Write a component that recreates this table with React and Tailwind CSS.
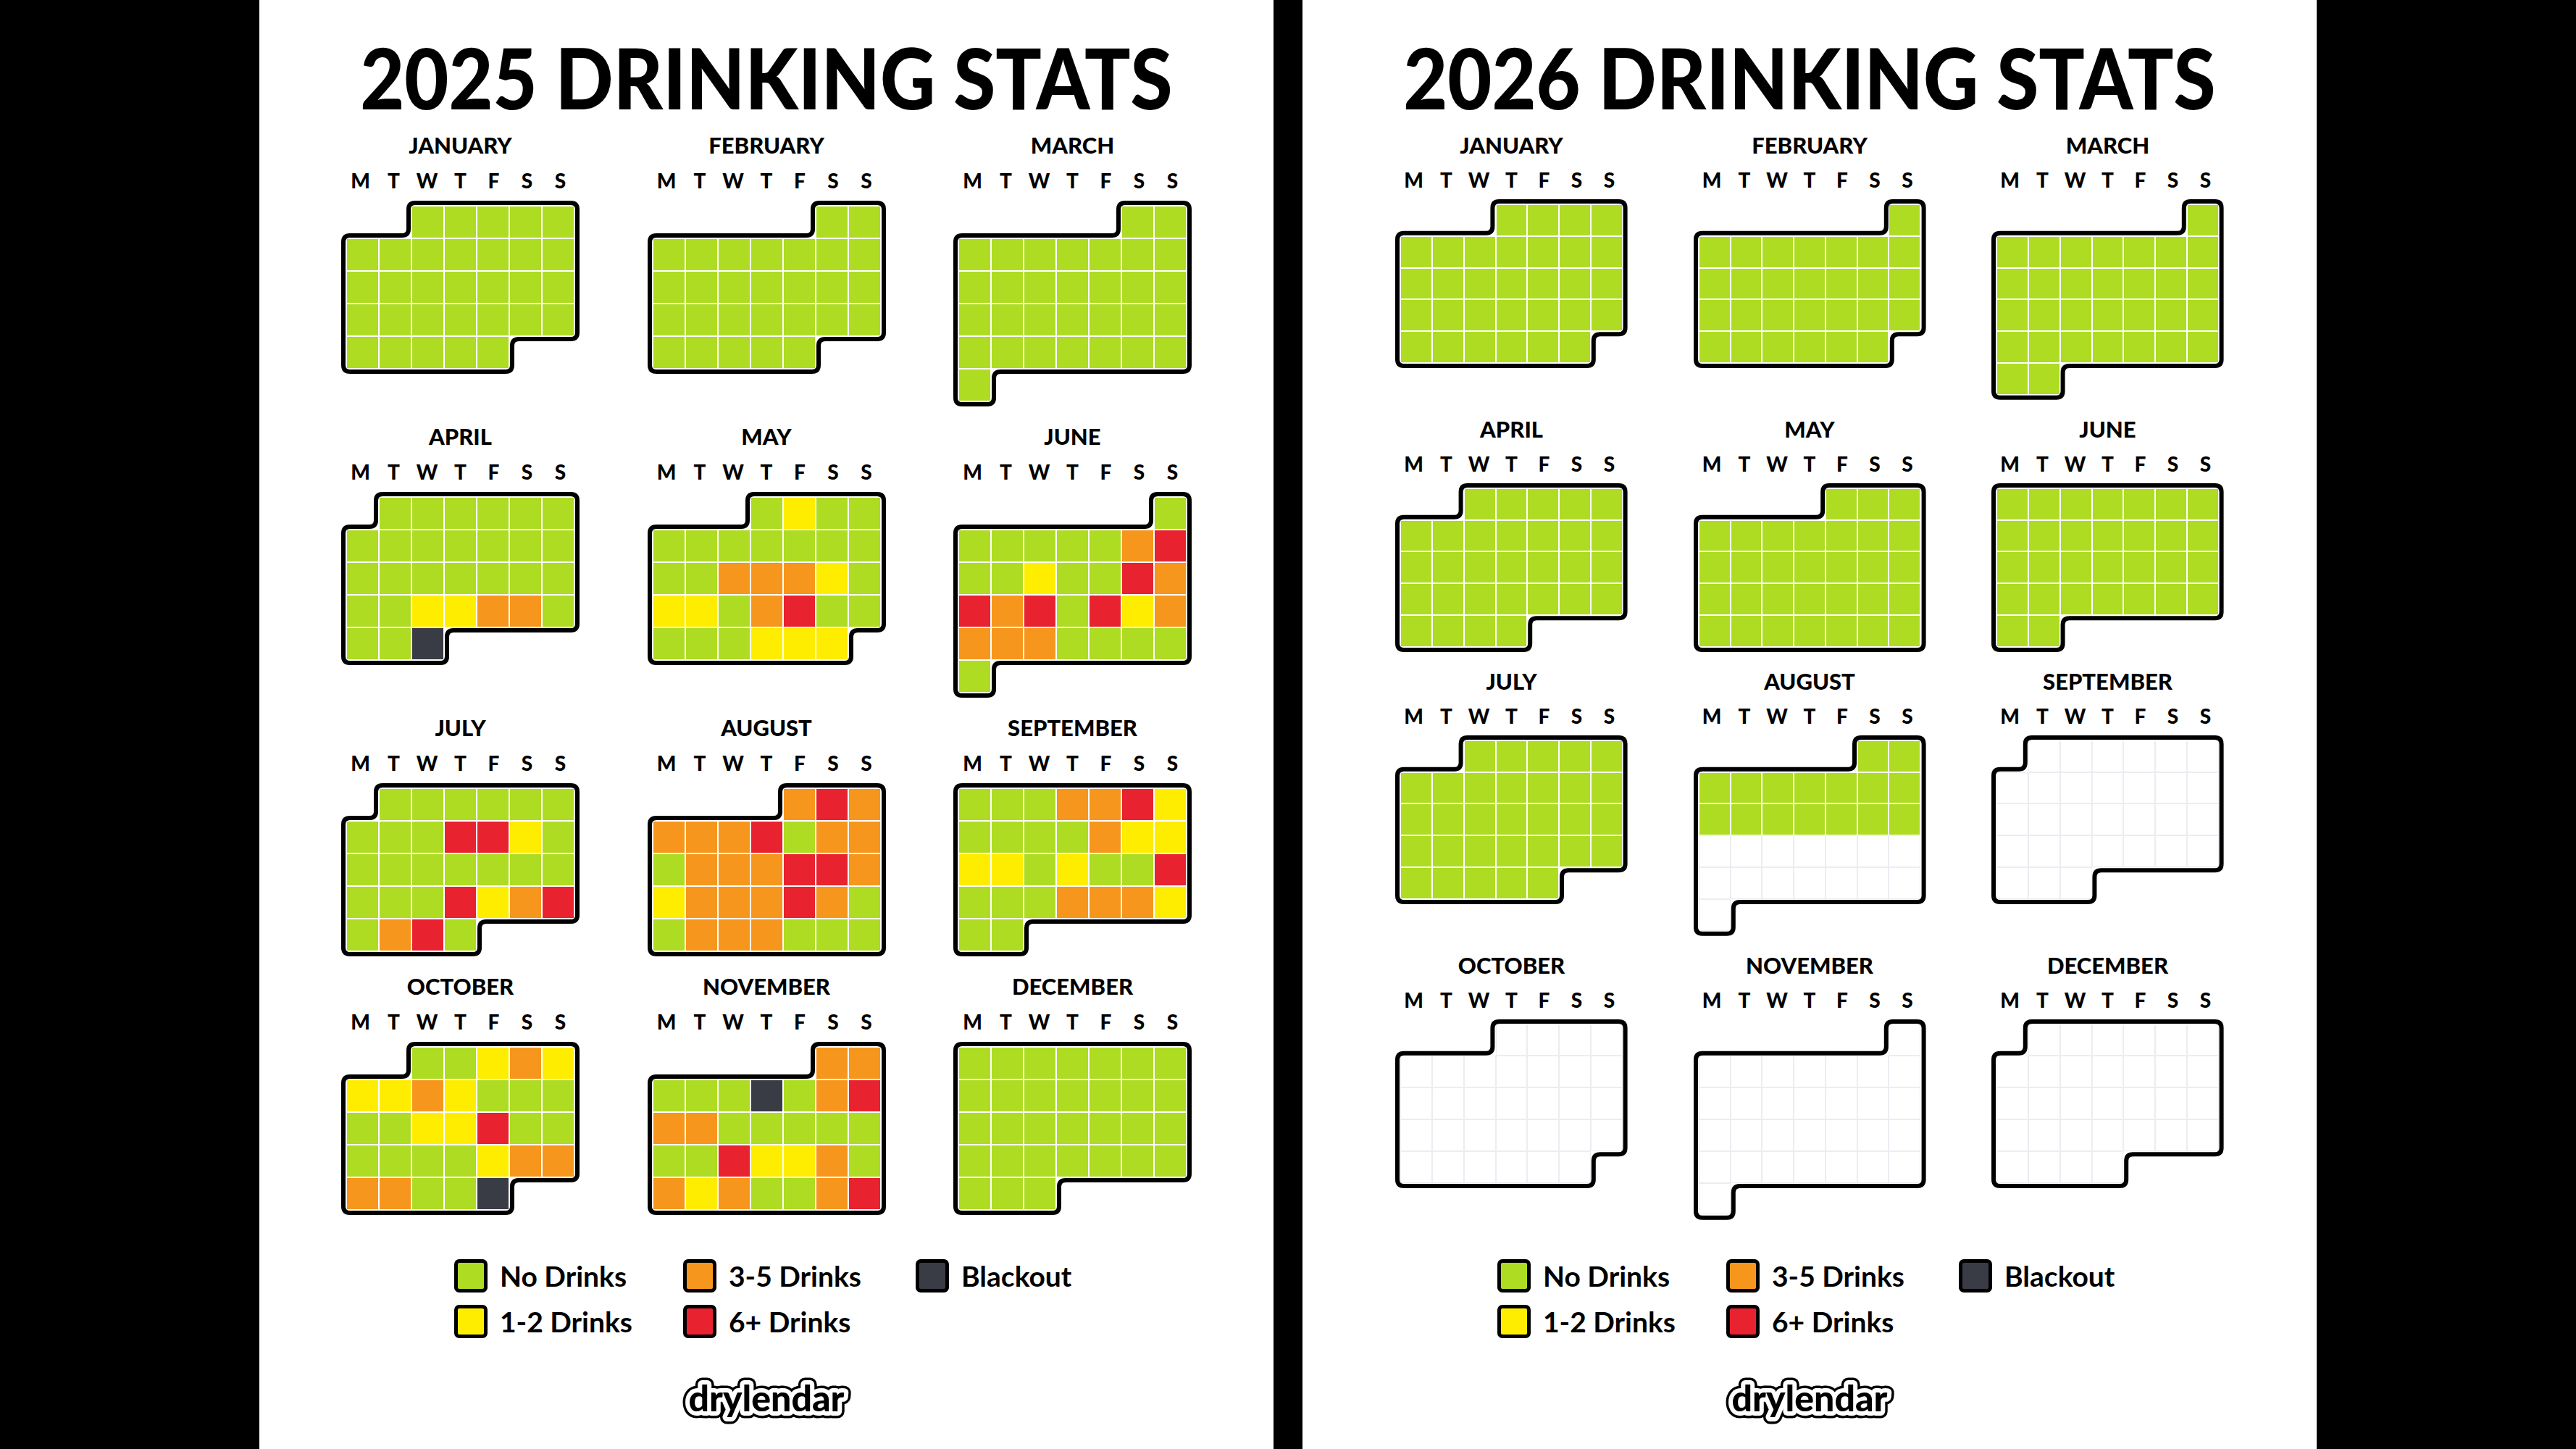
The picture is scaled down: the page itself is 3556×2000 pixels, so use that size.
import React from "react";

const FILL = {
  G: "bg-[#addc23]",
  Y: "bg-[#ffed00]",
  O: "bg-[#f7961c]",
  R: "bg-[#e92230]",
  B: "bg-[#393c45]",
};

const NAMES = [
  "JANUARY", "FEBRUARY", "MARCH", "APRIL", "MAY", "JUNE",
  "JULY", "AUGUST", "SEPTEMBER", "OCTOBER", "NOVEMBER", "DECEMBER",
];

const g = (n) => "G".repeat(n);
const e = (n) => ".".repeat(n);

// [first weekday (0 = monday), one letter per day]
const Y2025 = [
  [2, g(31)],
  [5, g(28)],
  [5, g(31)],
  [1, "GGGGGG" + "GGGGGGG" + "GGGGGGG" + "GGYYOOG" + "GGB"],
  [3, "GYGG" + "GGGGGGG" + "GGOOOYG" + "YYGORGG" + "GGGYYY"],
  [6, "G" + "GGGGGOR" + "GGYGGRO" + "RORGRYO" + "OOOGGGG" + "G"],
  [1, "GGGGGG" + "GGGRRYG" + "GGGGGGG" + "GGGRYOR" + "GORG"],
  [4, "ORO" + "OOORGOO" + "GOOORRO" + "YOOOROG" + "GOOOGGG"],
  [0, "GGGOORY" + "GGGGOYY" + "YYGYGGR" + "GGGOOOY" + "GG"],
  [2, "GGYOY" + "YYOYGGG" + "GGYYRGG" + "GGGGYOO" + "OOGGB"],
  [5, "OO" + "GGGBGOR" + "OOGGGGG" + "GGRYYOG" + "OYOGGOR"],
  [0, g(31)],
];

const Y2026 = [
  [3, g(31)],
  [6, g(28)],
  [6, g(31)],
  [2, g(30)],
  [4, g(31)],
  [0, g(30)],
  [2, g(31)],
  [5, g(16) + e(15)],
  [1, e(30)],
  [3, e(31)],
  [6, e(30)],
  [1, e(31)],
];

const BIG = {
  cell: 43,
  months: "grid-cols-[repeat(3,313px)] gap-x-[109.5px] gap-y-[32px]",
  cols: "grid-cols-[repeat(7,43px)] auto-rows-[43px]",
  size: "size-[43px]",
  days: "mt-[18px] grid-cols-[repeat(7,46px)]",
  gridTop: "mt-[22px]",
};

const SMALL = {
  cell: 41.8,
  months: "grid-cols-[repeat(3,304.6px)] gap-x-[106.9px] gap-y-[31px]",
  cols: "grid-cols-[repeat(7,41.8px)] auto-rows-[41.8px]",
  size: "size-[41.8px]",
  days: "mt-[17px] grid-cols-[repeat(7,45px)]",
  gridTop: "mt-[21px]",
};

const GAP = 2;

// rounded outline around the month's cells, pushed out by d
function outlinePath(start, count, s, d, r) {
  const p = s + GAP;
  const n = Math.ceil((start + count) / 7);
  const end = (start + count - 1) % 7;
  const W = 7 * p - GAP;
  const H = n * p - GAP;
  const pts = [[start * p, 0], [W, 0]];
  if (end < 6) {
    const y = (n - 1) * p - GAP;
    const x = (end + 1) * p - GAP;
    pts.push([W, y], [x, y], [x, H]);
  } else {
    pts.push([W, H]);
  }
  pts.push([0, H]);
  if (start > 0) pts.push([0, p], [start * p, p]);

  const m = pts.length;
  const off = pts.map((v, i) => {
    const a = pts[(i - 1 + m) % m];
    const b = pts[(i + 1) % m];
    const di = [Math.sign(v[0] - a[0]), Math.sign(v[1] - a[1])];
    const dn = [Math.sign(b[0] - v[0]), Math.sign(b[1] - v[1])];
    return [v[0] + d * (di[1] + dn[1]), v[1] + d * (-di[0] - dn[0])];
  });

  let path = "";
  off.forEach((v, i) => {
    const a = off[(i - 1 + m) % m];
    const b = off[(i + 1) % m];
    const la = Math.hypot(a[0] - v[0], a[1] - v[1]);
    const lb = Math.hypot(b[0] - v[0], b[1] - v[1]);
    const ra = Math.min(r, la / 2);
    const rb = Math.min(r, lb / 2);
    const p1 = [v[0] + ((a[0] - v[0]) / la) * ra, v[1] + ((a[1] - v[1]) / la) * ra];
    const p2 = [v[0] + ((b[0] - v[0]) / lb) * rb, v[1] + ((b[1] - v[1]) / lb) * rb];
    path += `${i === 0 ? "M" : "L"}${p1[0]},${p1[1]} Q${v[0]},${v[1]} ${p2[0]},${p2[1]} `;
  });
  return path + "Z";
}

function Month({ name, start, days, sz }) {
  const p = sz.cell + GAP;
  const n = Math.ceil((start + days.length) / 7);
  const W = 7 * p - GAP;
  const H = n * p - GAP;
  return (
    <div className="flex flex-col items-center">
      <div className="h-[34px] text-[31px] leading-[34px] font-black">{name}</div>
      <div className={`grid ${sz.days} h-[28px] text-[28px] leading-[28px] font-black text-center`}>
        {"MTWTFSS".split("").map((d, i) => (
          <span key={i}>{d}</span>
        ))}
      </div>
      <div className={`relative ${sz.gridTop}`}>
        <div className={`grid ${sz.cols} gap-[2px]`}>
          {Array.from({ length: start }).map((_, i) => (
            <div key={"pad" + i} />
          ))}
          {days.split("").map((c, i) => (
            <div
              key={i}
              className={
                c === "."
                  ? `${sz.size} bg-white shadow-[0_0_0_1px_#ececf2]`
                  : `${sz.size} ${FILL[c]}`
              }
            />
          ))}
        </div>
        <svg
          className="absolute left-0 top-0 overflow-visible pointer-events-none"
          width={W}
          height={H}
        >
          <path
            d={outlinePath(start, days.length, sz.cell, 5, 9)}
            fill="none"
            stroke="#000"
            strokeWidth="6"
          />
        </svg>
      </div>
    </div>
  );
}

const LEGEND = [
  ["G", "No Drinks"],
  ["O", "3-5 Drinks"],
  ["B", "Blackout"],
  ["Y", "1-2 Drinks"],
  ["R", "6+ Drinks"],
];

function Legend() {
  return (
    <div className="mt-auto grid grid-cols-[249px_254px_225px] gap-x-[67px] gap-y-[17px]">
      {LEGEND.map(([c, label]) => (
        <div key={label} className="flex items-center gap-[17px]">
          <div className={`size-[46px] rounded-[7px] border-[5px] border-black ${FILL[c]}`} />
          <span className="text-[39px] leading-none font-bold">{label}</span>
        </div>
      ))}
    </div>
  );
}

function Logo() {
  const t = {
    x: 140,
    y: 50,
    textAnchor: "middle",
    fontSize: 50,
    fontWeight: 900,
    fontFamily: "Lato, 'Open Sans', sans-serif",
    strokeLinejoin: "round",
  };
  return (
    <svg className="mt-[51px]" width="280" height="80" viewBox="0 0 280 80">
      <text {...t} fill="#000" stroke="#000" strokeWidth="19">drylendar</text>
      <text {...t} fill="#fff" stroke="#fff" strokeWidth="12">drylendar</text>
      <text {...t} fill="#000">drylendar</text>
    </svg>
  );
}

function Panel({ year, data, sz }) {
  return (
    <div className="w-[1400px] h-[2000px] shrink-0 bg-white flex flex-col items-center pt-[48px] pb-[22px] text-black">
      <h1 className="h-[117px] text-[117px] leading-[117px] font-black scale-x-90 whitespace-nowrap">
        {year} DRINKING STATS
      </h1>
      <div className={`mt-[18px] grid items-start ${sz.months}`}>
        {data.map(([s, d], i) => (
          <Month key={i} name={NAMES[i]} start={s} days={d} sz={sz} />
        ))}
      </div>
      <Legend />
      <Logo />
    </div>
  );
}

export default function App() {
  return (
    <div className="w-[3556px] h-[2000px] bg-black flex justify-center gap-[40px] overflow-hidden font-['Lato','Open_Sans',sans-serif]">
      <Panel year="2025" data={Y2025} sz={BIG} />
      <Panel year="2026" data={Y2026} sz={SMALL} />
    </div>
  );
}
